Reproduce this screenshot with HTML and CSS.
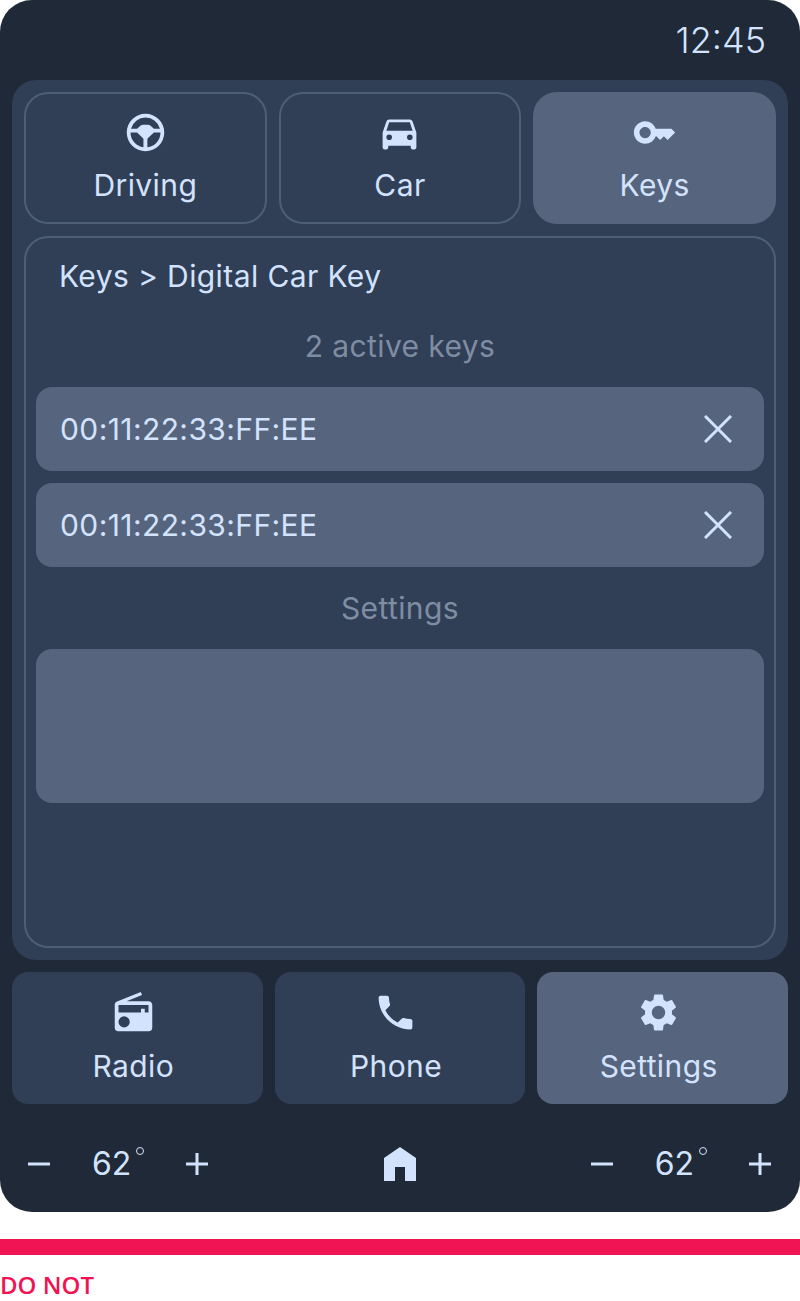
FILE: index.html
```html
<!DOCTYPE html>
<html lang="en">
<head>
<meta charset="utf-8">
<title>Digital Car Key</title>
<link rel="stylesheet" href="styles.css">
</head>
<body>
<div class="device">
  <header class="status"><span class="clock">12:45</span></header>
  <main class="panel">
    <nav class="tabs">
      <div class="tab">
        <svg class="icon" viewBox="0 0 24 24"><path fill-rule="evenodd" d="M12 2a10 10 0 1 0 0 20 10 10 0 0 0 0-20zm0 2a8 8 0 0 1 7.750 6H16.500l-1.800-1.600c-.4-.35-.9-.6-1.500-.6h-2.400c-.6 0-1.100.25-1.500.6L7.500 10H4.250A8 8 0 0 1 12 4zm-8 8h3.500l2.500 2.400.9.900v4.600A8 8 0 0 1 4 12zm9 7.900v-4.600l.9-.9 2.600-2.400H20a8 8 0 0 1-7 7.900z"/></svg>
        <span>Driving</span>
      </div>
      <div class="tab">
        <svg class="icon" viewBox="0 0 24 24"><path d="M18.920 6.010C18.720 5.420 18.160 5 17.500 5h-11c-.66 0-1.210.42-1.420 1.010L3 12v8c0 .55.45 1 1 1h1c.55 0 1-.45 1-1v-1h12v1c0 .55.45 1 1 1h1c.55 0 1-.45 1-1v-8l-2.080-5.990zM6.500 16a1.500 1.500 0 1 1 0-3 1.500 1.500 0 0 1 0 3zm11 0a1.500 1.500 0 1 1 0-3 1.500 1.500 0 0 1 0 3zM5 11l1.500-4.500h11L19 11H5z"/></svg>
        <span>Car</span>
      </div>
      <div class="tab tab-active">
        <svg class="icon" viewBox="0 0 24 24"><path d="M21 10h-8.350C11.830 7.670 9.610 6 7 6c-3.310 0-6 2.690-6 6s2.690 6 6 6c2.610 0 4.830-1.670 5.650-4H13l2 2 2-2 2 2 4-4.040L21 10zM7 15c-1.650 0-3-1.350-3-3s1.350-3 3-3 3 1.350 3 3-1.350 3-3 3z"/></svg>
        <span>Keys</span>
      </div>
    </nav>
    <section class="content">
      <h1 class="crumb">Keys &gt; Digital Car Key</h1>
      <h2 class="section-label label-keys">2 active keys</h2>
      <div class="key-row">
        <span>00:11:22:33:FF:EE</span>
        <svg class="close" viewBox="0 0 28 28"><path d="M1 1l26 26M27 1L1 27"/></svg>
      </div>
      <div class="key-row">
        <span>00:11:22:33:FF:EE</span>
        <svg class="close" viewBox="0 0 28 28"><path d="M1 1l26 26M27 1L1 27"/></svg>
      </div>
      <h2 class="section-label label-settings">Settings</h2>
      <div class="settings-box"></div>
    </section>
  </main>
  <nav class="apps">
    <div class="app">
      <svg class="icon" viewBox="0 0 24 24"><path d="M3.240 6.150C2.510 6.430 2 7.170 2 8v12a2 2 0 0 0 2 2h16a2 2 0 0 0 2-2V8c0-1.110-.89-2-2-2H8.300l8.260-3.340L15.880 1 3.240 6.150zM7 20a3 3 0 1 1 0-6 3 3 0 0 1 0 6zm13-8h-2v-2h-2v2H4V8h16v4z"/></svg>
      <span>Radio</span>
    </div>
    <div class="app">
      <svg class="icon" viewBox="0 0 24 24"><path d="M6.620 10.790c1.440 2.830 3.760 5.140 6.590 6.590l2.200-2.200c.27-.27.67-.36 1.020-.24 1.120.37 2.330.57 3.570.57.550 0 1 .45 1 1V20c0 .55-.45 1-1 1C10.610 21 3 13.390 3 4c0-.55.45-1 1-1h3.500c.55 0 1 .45 1 1 0 1.250.2 2.450.57 3.570.11.350.03.740-.25 1.020l-2.200 2.200z"/></svg>
      <span>Phone</span>
    </div>
    <div class="app app-active">
      <svg class="icon" viewBox="0 0 24 24"><path d="M19.140 12.940c.04-.3.060-.61.060-.94 0-.32-.02-.64-.07-.94l2.030-1.580a.49.49 0 0 0 .12-.61l-1.920-3.320a.488.488 0 0 0-.59-.22l-2.390.96c-.5-.38-1.030-.7-1.620-.94l-.36-2.540a.484.484 0 0 0-.48-.41h-3.840c-.24 0-.43.170-.47.410l-.36 2.540c-.59.240-1.130.57-1.620.94l-2.390-.96c-.22-.08-.47 0-.59.220L2.740 8.870c-.12.210-.08.470.12.610l2.030 1.580c-.05.3-.09.630-.09.940s.02.640.07.940l-2.030 1.580a.49.49 0 0 0-.12.610l1.920 3.320c.12.220.37.290.59.220l2.390-.96c.5.380 1.030.7 1.620.94l.36 2.540c.05.240.24.410.48.410h3.840c.24 0 .44-.17.470-.41l.36-2.540c.59-.24 1.130-.56 1.620-.94l2.390.96c.22.080.47 0 .59-.22l1.920-3.320c.12-.22.070-.47-.12-.61l-2.010-1.580zM12 15.600a3.600 3.600 0 1 1 0-7.200 3.600 3.600 0 0 1 0 7.200z"/></svg>
      <span>Settings</span>
    </div>
  </nav>
  <footer class="climate">
    <div class="temp">
      <svg class="sign" viewBox="0 0 22 22"><path d="M0 11h22"/></svg>
      <span class="deg">62<span class="ring"></span></span>
      <svg class="sign" viewBox="0 0 22 22"><path d="M0 11h22M11 0v22"/></svg>
    </div>
    <svg class="home" viewBox="0 0 32 34"><path d="M16 0L32 11v23H21V20H11v14H0V11z"/></svg>
    <div class="temp">
      <svg class="sign" viewBox="0 0 22 22"><path d="M0 11h22"/></svg>
      <span class="deg">62<span class="ring"></span></span>
      <svg class="sign" viewBox="0 0 22 22"><path d="M0 11h22M11 0v22"/></svg>
    </div>
  </footer>
</div>
<div class="rule"></div>
<p class="verdict">DO NOT</p>
</body>
</html>
```
FILE: styles.css
```css
* { box-sizing: border-box; }
html, body { margin: 0; padding: 0; background: #fff; }
body { font-family: Inter, Roboto, sans-serif; color: #d3e3fd; }
h1, h2, p { margin: 0; font-weight: 400; }

.device {
  width: 800px;
  height: 1212px;
  background: #1f2938;
  border-radius: 32px;
  padding: 0 12px;
  display: flex;
  flex-direction: column;
}
.status {
  height: 80px;
  flex: none;
  display: flex;
  justify-content: flex-end;
  align-items: center;
  padding-right: 22px;
}
.clock { font-size: 36px; line-height: 80px; font-weight: 300; }

.panel {
  height: 880px;
  flex: none;
  background: #303f56;
  border-radius: 24px;
  padding: 12px;
  display: flex;
  flex-direction: column;
  gap: 12px;
}
.tabs { display: grid; grid-template-columns: repeat(3, 1fr); gap: 12px; height: 132px; flex: none; }
.tab {
  border: 2px solid #4f5e77;
  border-radius: 24px;
  display: flex;
  flex-direction: column;
  align-items: center;
  font-size: 30px;
  line-height: 40px;
  letter-spacing: 0.4px;
  padding-top: 16px;
}
.tab-active { background: #56657d; border-color: #56657d; }
.icon { width: 45px; height: 45px; fill: #d3e3fd; flex: none; margin-bottom: 10px; }

.content {
  flex: 1;
  border: 2px solid #4f5e77;
  border-radius: 24px;
  padding: 0 10px;
  display: flex;
  flex-direction: column;
}
.crumb { font-size: 30px; line-height: 40px; letter-spacing: 0.4px; padding: 18px 0 0 23px; }
.section-label { font-size: 30px; line-height: 40px; letter-spacing: 0.4px; text-align: center; color: #7f8da3; }
.label-keys { margin-top: 30px; margin-bottom: 21px; }
.label-settings { margin-top: 21px; margin-bottom: 21px; }
.key-row {
  height: 84px;
  background: #56657d;
  border-radius: 16px;
  display: flex;
  align-items: center;
  justify-content: space-between;
  padding: 0 32px 0 24px;
  font-size: 30px;
  letter-spacing: 0.4px;
  flex: none;
}
.key-row + .key-row { margin-top: 12px; }
.close { width: 28px; height: 28px; fill: none; stroke: #d3e3fd; stroke-width: 3; }
.settings-box { height: 154px; background: #56657d; border-radius: 16px; flex: none; }

.apps { display: grid; grid-template-columns: repeat(3, 1fr); gap: 12px; margin-top: 12px; height: 132px; flex: none; }
.app {
  background: #303f56;
  border-radius: 16px;
  display: flex;
  flex-direction: column;
  align-items: center;
  font-size: 30px;
  line-height: 40px;
  letter-spacing: 0.4px;
  padding: 18px 8px 0 0;
}
.app-active { background: #56657d; }
.app .icon { margin-bottom: 11px; }

.climate { flex: 1; display: flex; justify-content: space-between; align-items: center; padding: 12px 17px 0 16px; }
.temp { display: flex; align-items: center; gap: 42px; }
.deg { font-size: 32px; line-height: 40px; position: relative; padding-right: 13px; }
.ring { position: absolute; right: 0; top: 3px; width: 8px; height: 8px; border: 1.5px solid #d3e3fd; border-radius: 50%; }
.sign { width: 22px; height: 22px; fill: none; stroke: #d3e3fd; stroke-width: 3; }
.home { width: 32px; height: 34px; fill: #d3e3fd; }

.rule { height: 16px; background: #f01455; margin-top: 27px; }
.verdict { font-family: "Open Sans", sans-serif; font-weight: 600; font-size: 24px; line-height: 30px; color: #f01455; margin-top: 15px; }
```
